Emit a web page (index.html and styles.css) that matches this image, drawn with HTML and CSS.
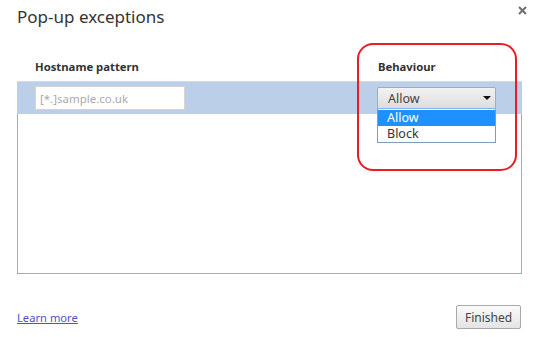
FILE: index.html
```html
<!DOCTYPE html>
<html lang="en">
<head>
  <meta charset="UTF-8">
  <title>Pop-up exceptions</title>
  <link rel="stylesheet" href="styles.css">
</head>
<body>

  <div class="dialog">
    <div class="header">
      <h1 class="title">Pop-up exceptions</h1>
      <button class="close" title="Close">
        <svg width="9" height="9" viewBox="0 0 9 9"><path d="M1 1 L8 8 M8 1 L1 8" stroke="#6e6e6e" stroke-width="2"/></svg>
      </button>
    </div>

    <div class="table">
      <div class="cols">
        <div>Hostname pattern</div>
        <div>Behaviour</div>
      </div>
      <div class="list">
        <div class="row">
          <input type="text" class="host" placeholder="[*.]sample.co.uk">
          <div class="select-wrap">
            <div class="select">
              <span>Allow</span>
              <span class="arrow"></span>
            </div>
            <ul class="options">
              <li class="selected">Allow</li>
              <li>Block</li>
            </ul>
          </div>
        </div>
      </div>
    </div>

    <div class="footer">
      <a href="#" class="learn">Learn more</a>
      <button class="finished">Finished</button>
    </div>

    <div class="highlight"></div>
  </div>

</body>
</html>
```

FILE: styles.css
```css
body {
  margin: 0;
  background-color: white;
  font-family: 'Noto Sans', 'Open Sans', sans-serif;
  color: #333;
}

.dialog {
  position: relative;
  height: 337px;
  padding: 0 17px;
  box-sizing: border-box;
}

.header {
  display: flex;
  justify-content: space-between;
  align-items: flex-start;
  height: 36px;
}

.title {
  margin: 7px 0 0 0;
  font-size: 17px;
  font-weight: normal;
  line-height: 20px;
  color: #333;
}

.close {
  margin: 5px -6px 0 0;
  padding: 0;
  border: none;
  background: none;
  width: 11px;
  height: 11px;
  display: flex;
  align-items: center;
  justify-content: center;
}

.cols {
  display: grid;
  grid-template-columns: 343px 1fr;
  padding: 22px 0 0 18px;
  height: 23px;
  font-size: 11.3px;
  font-weight: bold;
  line-height: 18px;
  color: #333;
}

.list {
  height: 193px;
  border: 1px solid #7fb3f2;
  border-top: none;
  box-sizing: border-box;
}

.row {
  display: grid;
  grid-template-columns: 342px 119px;
  align-items: center;
  height: 33px;
  margin: 0 -1px;
  padding-left: 18px;
  background-color: #bccfe8;
  border-top: 1px solid #d6d9de;
  box-sizing: border-box;
}

.host {
  width: 150px;
  height: 24px;
  box-sizing: border-box;
  border: 1px solid #d4d4d4;
  padding: 0 4px;
  font-family: inherit;
  font-size: 11.5px;
  outline: none;
}

.host::placeholder {
  color: #aaa;
}

.select-wrap {
  position: relative;
}

.select {
  display: flex;
  justify-content: space-between;
  align-items: center;
  height: 22px;
  padding: 0 4px 0 10px;
  box-sizing: border-box;
  border: 1px solid #7eb4ea;
  border-radius: 2px 2px 0 0;
  background: linear-gradient(#f2f2f2, #dddddd);
  font-size: 12.5px;
  color: #444;
}

.arrow {
  width: 0;
  height: 0;
  border-left: 4px solid transparent;
  border-right: 4px solid transparent;
  border-top: 4px solid #111;
}

.options {
  position: absolute;
  top: 22px;
  left: 0;
  right: 0;
  margin: 0;
  padding: 1px 0 0 0;
  list-style: none;
  background-color: white;
  border: 1px solid #7f9db9;
  border-top: none;
  font-size: 12.5px;
  line-height: 16px;
  color: #333;
}

.options li {
  padding-left: 9px;
}

.options li.selected {
  background-color: #1e90ff;
  color: white;
}

.footer {
  display: flex;
  justify-content: space-between;
  align-items: center;
  margin-top: 31px;
  padding-right: 1px;
}

.learn {
  font-size: 11.2px;
  color: #4b55c8;
}

.finished {
  width: 65px;
  height: 24px;
  padding: 0;
  border: 1px solid #a9a9a9;
  border-radius: 2px;
  background: linear-gradient(#fafafa, #e4e4e4);
  font-family: inherit;
  font-size: 12px;
  color: #444;
}

.highlight {
  position: absolute;
  left: 357px;
  top: 43px;
  width: 160px;
  height: 128px;
  box-sizing: border-box;
  border: 2px solid #ea1c24;
  border-radius: 16px;
  pointer-events: none;
}
```
